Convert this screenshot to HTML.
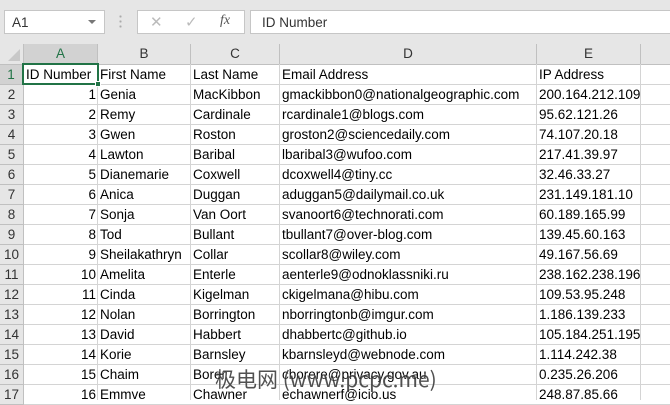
<!DOCTYPE html>
<html><head><meta charset="utf-8"><style>
*{margin:0;padding:0;box-sizing:border-box}
body{width:670px;height:400px;overflow:hidden;background:#fff;font-family:"Liberation Sans",sans-serif;position:relative}
.top{position:absolute;left:0;top:0;width:670px;height:44px;background:#e6e6e6}
.nb{position:absolute;left:4px;top:10px;width:101px;height:24px;background:#fff;border:1px solid #c6c6c6;font-size:13.5px;padding:4px 0 0 7px;color:#333}
.nb:after{content:"";position:absolute;right:8px;top:9px;border:4px solid transparent;border-top:4px solid #777}
.dots{position:absolute;left:119px;top:14px;width:3px;height:16px;background:radial-gradient(circle,#aaa 1px,transparent 1.2px) 0 0/3px 5px}
.fx{position:absolute;left:137px;top:10px;width:108px;height:24px;background:#fff;border:1px solid #c6c6c6;color:#bbb;font-size:15px}
.fb{position:absolute;left:250px;top:10px;width:430px;height:24px;background:#fff;border:1px solid #c6c6c6;font-size:13.5px;padding:4px 0 0 11px;color:#333}
.g{position:absolute;font-size:13.5px;white-space:nowrap;overflow:visible;height:20px;line-height:20px;color:#000}
.h{background:#e6e6e6;text-align:center;color:#333;border-right:1px solid #c0c0c0;border-bottom:1px solid #c0c0c0}
.vl{position:absolute;top:64px;width:1px;height:336px;background:#d4d4d4}
.hl{position:absolute;left:24px;width:646px;height:1px;background:#d4d4d4}
</style></head><body>
<div class="top"></div>
<div class="nb">A1</div>
<div class="dots"></div>
<div class="fx"><span style="position:absolute;left:12px;top:2px">✕</span><span style="position:absolute;left:47px;top:2px">✓</span><span style="position:absolute;left:82px;top:2px;color:#555;font-family:'Liberation Serif',serif;font-style:italic;font-size:14px">fx</span></div>
<div class="fb">ID Number</div>
<div id="grid"></div>
<script>
var cols=[[24,98,"A"],[98,191,"B"],[191,280,"C"],[280,537,"D"],[537,641,"E"],[641,700,""]];
var data=[["ID Number","First Name","Last Name","Email Address","IP Address"],
[1,"Genia","MacKibbon","gmackibbon0@nationalgeographic.com","200.164.212.109"],
[2,"Remy","Cardinale","rcardinale1@blogs.com","95.62.121.26"],
[3,"Gwen","Roston","groston2@sciencedaily.com","74.107.20.18"],
[4,"Lawton","Baribal","lbaribal3@wufoo.com","217.41.39.97"],
[5,"Dianemarie","Coxwell","dcoxwell4@tiny.cc","32.46.33.27"],
[6,"Anica","Duggan","aduggan5@dailymail.co.uk","231.149.181.10"],
[7,"Sonja","Van Oort","svanoort6@technorati.com","60.189.165.99"],
[8,"Tod","Bullant","tbullant7@over-blog.com","139.45.60.163"],
[9,"Sheilakathryn","Collar","scollar8@wiley.com","49.167.56.69"],
[10,"Amelita","Enterle","aenterle9@odnoklassniki.ru","238.162.238.196"],
[11,"Cinda","Kigelman","ckigelmana@hibu.com","109.53.95.248"],
[12,"Nolan","Borrington","nborringtonb@imgur.com","1.186.139.233"],
[13,"David","Habbert","dhabbertc@github.io","105.184.251.195"],
[14,"Korie","Barnsley","kbarnsleyd@webnode.com","1.114.242.38"],
[15,"Chaim","Borer","cborere@privacy.gov.au","0.235.26.206"],
[16,"Emmve","Chawner","echawnerf@icio.us","248.87.85.66"]];
var h="";
h+='<div class="g h" style="left:0;top:44px;width:24px;height:21px;background:#e6e6e6"><span style="position:absolute;right:3px;bottom:3px;border-width:0 0 12px 12px;border-style:solid;border-color:transparent transparent #c8c8c8 transparent"></span></div>';
cols.forEach(function(c,i){h+='<div class="g h" style="left:'+c[0]+'px;top:44px;width:'+(c[1]-c[0])+'px;height:21px;'+(i==0?'background:#d2d2d2;border-bottom:2px solid #217346;color:#217346':'')+'">'+c[2]+'</div>';});
cols.forEach(function(c){h+='<div class="vl" style="left:'+(c[1]-1)+'px"></div>';});
for(var r=0;r<17;r++){var t=65+r*20;
h+='<div class="g h" style="left:0;top:'+t+'px;width:24px;'+(r==0?'background:#d2d2d2;border-right:2px solid #217346;color:#217346':'')+'">'+(r+1)+'</div>';
h+='<div class="hl" style="top:'+(t+19)+'px"></div>';
if(data[r])data[r].forEach(function(v,i){var c=cols[i];var num=typeof v=="number";
h+='<div class="g" style="left:'+(c[0]+2)+'px;top:'+t+'px;width:'+(c[1]-c[0]-4)+'px;'+(num?'text-align:right':'')+'">'+v+'</div>';});}
h+='<div style="position:absolute;left:22px;top:63px;width:77px;height:22px;border:2px solid #217346"></div><div style="position:absolute;left:95px;top:81px;width:6px;height:6px;background:#217346;border:1px solid #fff"></div>';
h+='<div style="position:absolute;left:215px;top:364px;font-size:21px;color:#333;opacity:.85;font-family:\'Noto Sans CJK SC\',sans-serif;white-space:nowrap;text-shadow:0 0 2px #fff">极电网 (www.pcpc.me)</div>';
document.getElementById("grid").innerHTML=h;
</script>
</body></html>
